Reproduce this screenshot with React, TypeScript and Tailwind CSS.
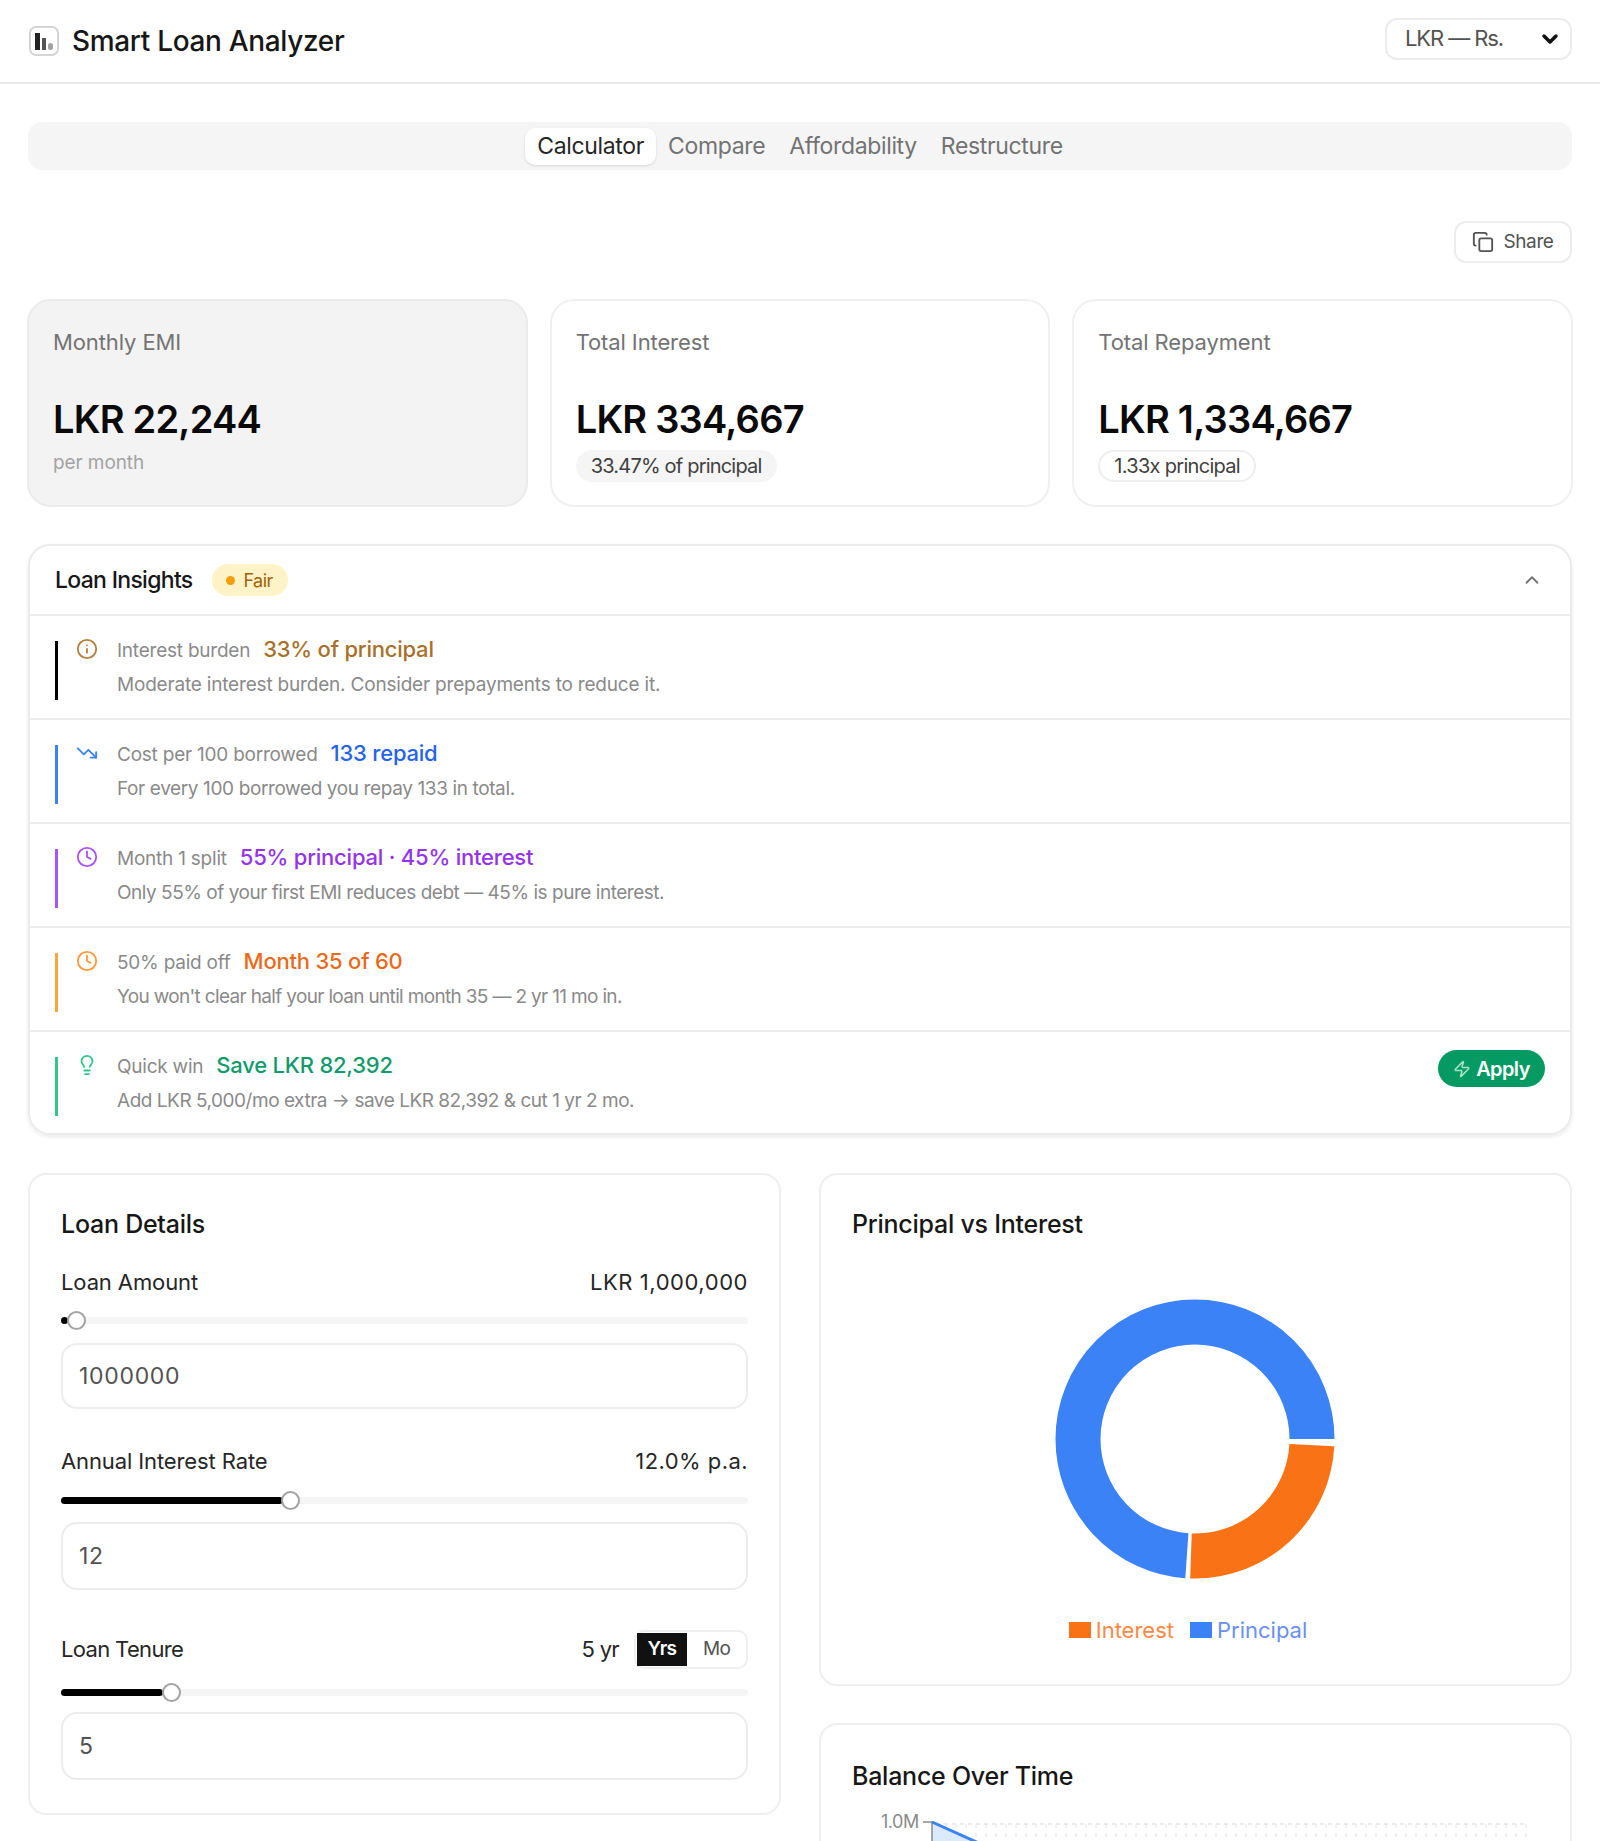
import React from 'react';
import { ChevronDown, ChevronUp, Clock, Copy, Info, Lightbulb, TrendingDown, Zap } from 'lucide-react';

const tabs = ['Calculator', 'Compare', 'Affordability', 'Restructure'];

const insights = [
  {
    icon: Info,
    bar: 'bg-black',
    iconColor: 'text-[#b5803f]',
    label: 'Interest burden',
    value: '33% of principal',
    valueColor: 'text-[#a8702a]',
    text: 'Moderate interest burden. Consider prepayments to reduce it.',
    textSpacing: 'tracking-[-0.01em]',
  },
  {
    icon: TrendingDown,
    bar: 'bg-[#3b82f6]',
    iconColor: 'text-[#3b82f6]',
    label: 'Cost per 100 borrowed',
    value: '133 repaid',
    valueColor: 'text-[#2563eb]',
    text: 'For every 100 borrowed you repay 133 in total.',
    textSpacing: 'tracking-[-0.02em]',
  },
  {
    icon: Clock,
    bar: 'bg-[#a855f7]',
    iconColor: 'text-[#a855f7]',
    label: 'Month 1 split',
    value: '55% principal · 45% interest',
    valueColor: 'text-[#9333ea]',
    text: 'Only 55% of your first EMI reduces debt — 45% is pure interest.',
    textSpacing: 'tracking-[-0.025em]',
  },
  {
    icon: Clock,
    bar: 'bg-[#fba63c]',
    iconColor: 'text-[#fb9a3c]',
    label: '50% paid off',
    value: 'Month 35 of 60',
    valueColor: 'text-[#ea6a1a]',
    text: "You won't clear half your loan until month 35 — 2 yr 11 mo in.",
    textSpacing: 'tracking-[-0.035em]',
  },
  {
    icon: Lightbulb,
    bar: 'bg-[#34c58a]',
    iconColor: 'text-[#34c58a]',
    label: 'Quick win',
    value: 'Save LKR 82,392',
    valueColor: 'text-[#0f9b6c]',
    text: 'Add LKR 5,000/mo extra → save LKR 82,392 & cut 1 yr 2 mo.',
    textSpacing: 'tracking-[-0.025em]',
  },
];

// dashed vertical grid of the balance chart
const gridLines = Array.from({ length: 60 }, (_, i) => 84 + i * 10);

const Slider = ({ fill, thumb }: { fill: string; thumb: string }) => (
  <div className="relative h-[7px] rounded-full bg-[#f5f5f5]">
    <div className={`h-full rounded-full bg-black ${fill}`} />
    <div className={`absolute top-[-6px] h-[19px] w-[19px] rounded-full border-2 border-[#a3a3a3] bg-white ${thumb}`} />
  </div>
);

const NumberInput = ({ value, height }: { value: string; height: string }) => (
  <input
    readOnly
    value={value}
    className={`w-full rounded-[16px] border-2 border-[#ececec] bg-white px-[16px] text-[23px] tracking-[0.03em] text-[#525252] outline-none ${height}`}
  />
);

const App = () => {
  return (
    <div className="h-[1841px] overflow-hidden bg-white font-['Inter',sans-serif] text-black">
      <header className="flex h-[84px] items-center justify-between border-b-2 border-[#e8e8e8] pl-[29px] pr-[28px]">
        <div className="flex items-center gap-[13px]">
          <div className="flex h-[30px] w-[30px] items-end gap-[2px] rounded-[7px] border-2 border-[#d4d4d4] px-[4px] pb-[4px]">
            <div className="h-[17px] w-[5px] bg-[#222]" />
            <div className="h-[12px] w-[4px] bg-[#555]" />
            <div className="h-[7px] w-[5px] rounded-full bg-[#a3a3a3]" />
          </div>
          <div className="text-[28px] font-medium tracking-[-0.012em] text-[#171717]">Smart Loan Analyzer</div>
        </div>
        <div className="-mt-[5px] flex h-[42px] w-[187px] items-center justify-between rounded-[12px] border-2 border-[#ececec] pl-[18px] pr-[8px] text-[22px] tracking-[-0.05em] text-[#525252]">
          <span>LKR — Rs.</span>
          <ChevronDown className="h-[24px] w-[24px] text-[#111]" strokeWidth={3.5} />
        </div>
      </header>

      <main className="px-[28px] pt-[38px]">
        <div className="flex h-[48px] items-center justify-center rounded-[14px] bg-[#f5f5f5]">
          {tabs.map((tab, index) => (
            <div
              key={tab}
              className={`flex h-[37px] items-center rounded-[10px] px-[12px] text-[23px] tracking-[-0.015em] ${
                index === 0 ? 'bg-white text-[#262626] shadow-sm' : 'text-[#737373]'
              }`}
            >
              {tab}
            </div>
          ))}
        </div>

        <div className="mt-[51px] flex justify-end">
          <div className="flex h-[42px] w-[118px] items-center justify-center gap-[9px] rounded-[12px] border-2 border-[#ececec] text-[19px] tracking-[-0.02em] text-[#525252]">
            <Copy className="h-[22px] w-[22px]" strokeWidth={2} />
            Share
          </div>
        </div>

        <div className="-mx-[1px] mt-[36px] grid grid-cols-3 gap-[22px]">
          <div className="h-[208px] rounded-[24px] border-2 border-[#ebebeb] bg-[#f3f3f3] px-[24px] pt-[25px]">
            <div className="text-[22px] tracking-[-0.005em] text-[#737373]">Monthly EMI</div>
            <div className="mt-[32px] text-[38px] font-semibold tracking-[-0.02em] text-[#0a0a0a]">LKR 22,244</div>
            <div className="mt-[1px] text-[19px] tracking-[-0.005em] text-[#a3a3a3]">per month</div>
          </div>
          <div className="h-[208px] rounded-[24px] border-2 border-[#f0f0f0] px-[24px] pt-[25px]">
            <div className="text-[22px] tracking-[-0.005em] text-[#737373]">Total Interest</div>
            <div className="mt-[32px] text-[38px] font-semibold tracking-[-0.02em] text-[#0a0a0a]">LKR 334,667</div>
            <div className="mt-[2px] inline-flex h-[32px] items-center rounded-full bg-[#f5f5f5] px-[15px] text-[20px] tracking-[-0.04em] text-[#404040]">
              33.47% of principal
            </div>
          </div>
          <div className="h-[208px] rounded-[24px] border-2 border-[#f0f0f0] px-[24px] pt-[25px]">
            <div className="text-[22px] tracking-[-0.005em] text-[#737373]">Total Repayment</div>
            <div className="mt-[32px] text-[38px] font-semibold tracking-[-0.02em] text-[#0a0a0a]">LKR 1,334,667</div>
            <div className="mt-[2px] inline-flex h-[32px] items-center rounded-full border-2 border-[#efefef] px-[14px] text-[20px] tracking-[-0.035em] text-[#404040]">
              1.33x principal
            </div>
          </div>
        </div>

        <section className="mt-[37px] h-[591px] rounded-[22px] border-2 border-[#ebebeb] shadow-[0_2px_4px_rgba(0,0,0,0.08)]">
          <div className="flex h-[70px] items-center justify-between border-b-2 border-[#ececec] pl-[25px] pr-[27px]">
            <div className="flex items-center gap-[19px]">
              <div className="text-[23px] font-medium tracking-[-0.03em] text-[#171717]">Loan Insights</div>
              <div className="flex h-[32px] w-[76px] items-center justify-center gap-[8px] rounded-full bg-[#fef3c7] text-[18px] tracking-[-0.03em] text-[#a16207]">
                <span className="h-[9px] w-[9px] rounded-full bg-[#f59e0b]" />
                Fair
              </div>
            </div>
            <ChevronUp className="h-[22px] w-[22px] text-[#737373]" strokeWidth={2} />
          </div>
          {insights.map((row, index) => {
            const Icon = row.icon;
            return (
              <div
                key={row.value}
                className={`flex h-[104px] items-start justify-between pl-[25px] pr-[25px] pt-[25px] ${
                  index < insights.length - 1 ? 'border-b-2 border-[#ececec]' : ''
                }`}
              >
                <div className="flex h-[59px] items-stretch">
                  <div className={`w-[3px] ${row.bar}`} />
                  <Icon className={`-mt-[3px] ml-[18px] h-[22px] w-[22px] ${row.iconColor}`} strokeWidth={2} />
                  <div className="-mt-[8px] ml-[19px]">
                    <div className="flex h-[24px] items-baseline gap-[13px] whitespace-nowrap">
                      <span className="text-[19px] tracking-[-0.012em] text-[#8a8a8a]">{row.label}</span>
                      <span className={`text-[22px] font-medium tracking-[-0.01em] ${row.valueColor}`}>{row.value}</span>
                    </div>
                    <div className={`mt-[14px] text-[19px] text-[#8a8a8a] ${row.textSpacing}`}>{row.text}</div>
                  </div>
                </div>
                {index === insights.length - 1 && (
                  <div className="-mt-[7px] flex h-[37px] w-[107px] items-center justify-center gap-[5px] rounded-full bg-[#059a63] text-[20px] font-semibold tracking-[-0.03em] text-white">
                    <Zap className="h-[18px] w-[18px] text-[#a7e3c8]" strokeWidth={2} />
                    Apply
                  </div>
                )}
              </div>
            );
          })}
        </section>

        <div className="mt-[38px] grid grid-cols-2 items-start gap-[38px]">
          <section className="h-[642px] rounded-[18px] border-2 border-[#efefef] px-[31px] pt-[31px]">
            <h2 className="text-[25px] font-medium tracking-[-0.01em] text-[#171717]">Loan Details</h2>

            <div className="mt-[22px] flex items-center justify-between text-[22px] tracking-[-0.005em] text-[#262626]">
              <span>Loan Amount</span>
              <span className="tracking-[0.025em]">LKR 1,000,000</span>
            </div>
            <div className="mt-[18px]">
              <Slider fill="w-[7px]" thumb="left-[6px]" />
            </div>
            <div className="mt-[19px]">
              <NumberInput value="1000000" height="h-[66px]" />
            </div>

            <div className="mt-[36px] flex items-center justify-between text-[22px] tracking-[-0.005em] text-[#262626]">
              <span>Annual Interest Rate</span>
              <span className="tracking-[0.02em]">12.0% p.a.</span>
            </div>
            <div className="mt-[19px]">
              <Slider fill="w-[222px]" thumb="left-[220px]" />
            </div>
            <div className="mt-[18px]">
              <NumberInput value="12" height="h-[68px]" />
            </div>

            <div className="mt-[40px] flex items-center justify-between text-[22px] tracking-[-0.005em] text-[#262626]">
              <span className="tracking-[-0.03em]">Loan Tenure</span>
              <div className="flex items-center gap-[15px] tracking-[-0.03em]">
                <span>5 yr</span>
                <div className="flex h-[39px] w-[114px] items-center rounded-[10px] border-2 border-[#efefef] pl-[1px] text-[19px]">
                  <div className="flex h-[33px] w-[50px] items-center justify-center bg-[#111] font-semibold text-white">Yrs</div>
                  <div className="flex-1 text-center text-[#525252]">Mo</div>
                </div>
              </div>
            </div>
            <div className="mt-[20px]">
              <Slider fill="w-[102px]" thumb="left-[101px]" />
            </div>
            <div className="mt-[16px]">
              <NumberInput value="5" height="h-[68px]" />
            </div>
          </section>

          <div className="flex flex-col gap-[37px]">
            <section className="h-[513px] rounded-[18px] border-2 border-[#efefef] pl-[31px] pr-[32px] pt-[31px]">
              <h2 className="text-[25px] font-medium tracking-[-0.01em] text-[#171717]">Principal vs Interest</h2>
              <div className="mt-[55px] flex justify-center">
                <svg width="280" height="280" viewBox="0 0 280 280">
                  <circle cx="140" cy="140" r="117" fill="none" stroke="#f97316" strokeWidth="45" pathLength={360} strokeDasharray="89 271" strokeDashoffset="-3" />
                  <circle cx="140" cy="140" r="117" fill="none" stroke="#3b82f6" strokeWidth="45" pathLength={360} strokeDasharray="266 94" strokeDashoffset="-94" />
                </svg>
              </div>
              <div className="mr-[14px] mt-[35px] flex items-center justify-center gap-[16px] text-[22px]">
                <div className="flex items-center gap-[5px] text-[#f98a46]">
                  <span className="h-[16px] w-[22px] bg-[#f97316]" />
                  Interest
                </div>
                <div className="flex items-center gap-[5px] text-[#6a8ff5]">
                  <span className="h-[16px] w-[22px] bg-[#3b82f6]" />
                  Principal
                </div>
              </div>
            </section>

            <section className="h-[300px] rounded-[18px] border-2 border-[#efefef] pl-[31px] pr-[32px] pt-[33px]">
              <h2 className="text-[25px] font-medium tracking-[-0.01em] text-[#171717]">Balance Over Time</h2>
              <svg width="686" height="120" viewBox="0 0 686 120" className="mt-[11px]">
                <text x="29" y="21" fontSize="18" fill="#8a8a8a" letterSpacing="-0.5">1.0M</text>
                {gridLines.map((x) => (
                  <path key={x} d={`M${x} 17 V 120`} stroke="#ededed" strokeWidth="1.5" strokeDasharray="4 5" />
                ))}
                <path d="M84 17 H 676" stroke="#e5e5e5" strokeWidth="1.5" strokeDasharray="4 4" />
                <path d="M80 15 L 380 150 L 80 150 Z" fill="#dbeafe" />
                <path d="M71 15 H 80 V 120" fill="none" stroke="#8a8a8a" strokeWidth="1.5" />
                <path d="M80 15 L 380 150" stroke="#3b82f6" strokeWidth="3" fill="none" />
              </svg>
            </section>
          </div>
        </div>
      </main>
    </div>
  );
};

export default App;
